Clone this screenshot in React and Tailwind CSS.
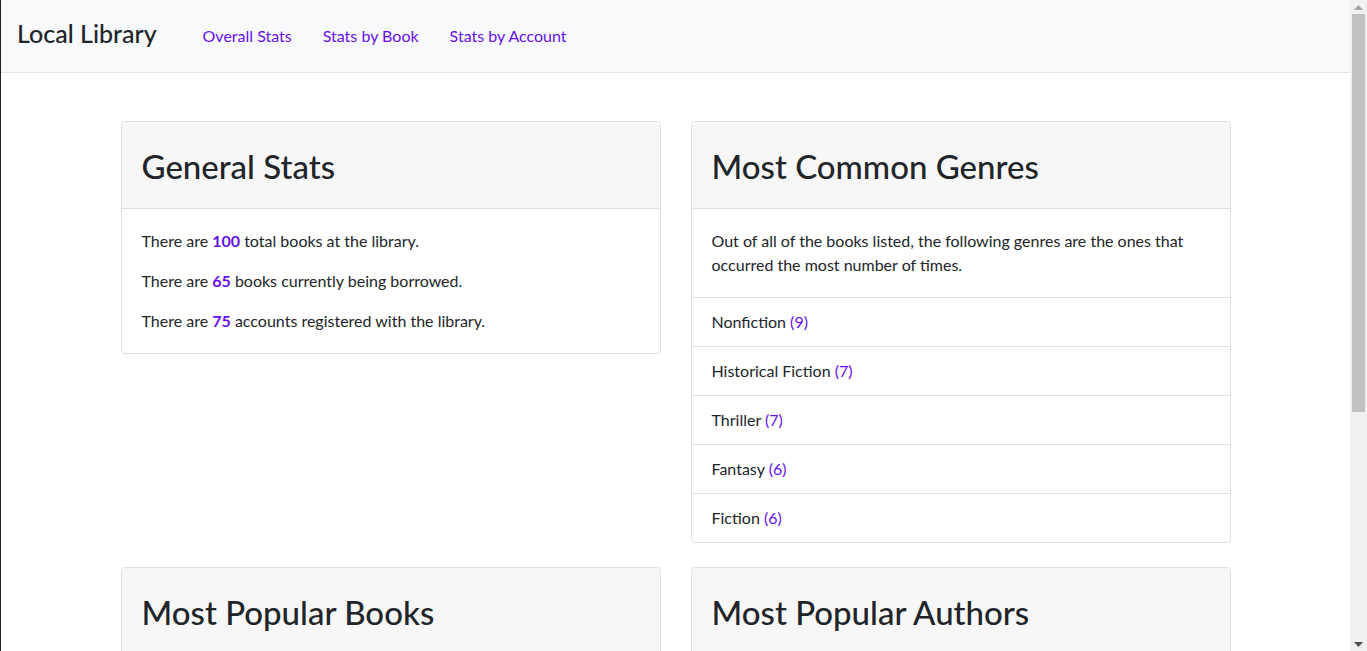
import React from 'react';

const font = { fontFamily: 'Lato, "Noto Sans", "Liberation Sans", sans-serif' };

const genres = [
  { name: 'Nonfiction', count: 9 },
  { name: 'Historical Fiction', count: 7 },
  { name: 'Thriller', count: 7 },
  { name: 'Fantasy', count: 6 },
  { name: 'Fiction', count: 6 },
];

const Card = ({ title, children }) => (
  <div className="border border-[#dfdfdf] rounded-[4px] bg-white overflow-hidden">
    <div className="h-[87px] bg-[#f7f7f7] border-b border-[#dfdfdf] px-5 flex items-center">
      <h2 className="text-[33px] font-medium leading-none text-[#212529] pt-[3px]">{title}</h2>
    </div>
    {children}
  </div>
);

const Num = ({ children }) => <strong className="font-bold text-[#6610f2]">{children}</strong>;

const App = () => {
  return (
    <div className="flex h-[651px] w-full overflow-hidden bg-white border-l border-[#222] text-[#212529]" style={font}>
      <div className="flex-1 min-w-0 overflow-hidden">
        {/* Navbar */}
        <nav className="h-[73px] bg-[#f8f9fa] border-b border-[#e3e4e6] flex items-center pl-4">
          <span className="text-[25px] font-medium leading-none text-[#212529] pb-[5px]">Local Library</span>
          <ul className="flex ml-[30px]">
            <li><a className="block px-4 text-[16px] text-[#6610f2]">Overall Stats</a></li>
            <li><a className="block px-[15px] text-[16px] text-[#6610f2]">Stats by Book</a></li>
            <li><a className="block px-4 text-[16px] text-[#6610f2]">Stats by Account</a></li>
          </ul>
        </nav>

        {/* Content */}
        <div className="w-[1110px] mx-auto mt-12">
          <div className="grid grid-cols-2 gap-x-[30px] items-start mb-6">
            <Card title="General Stats">
              <div className="p-5 text-[16px] leading-6 flex flex-col gap-4">
                <p>There are <Num>100</Num> total books at the library.</p>
                <p>There are <Num>65</Num> books currently being borrowed.</p>
                <p>There are <Num>75</Num> accounts registered with the library.</p>
              </div>
            </Card>

            <Card title="Most Common Genres">
              <div className="p-5 text-[16px] leading-6 border-b border-[#dfdfdf]">
                <p>Out of all of the books listed, the following genres are the ones that occurred the most number of times.</p>
              </div>
              <ul>
                {genres.map((g, i) => (
                  <li
                    key={g.name}
                    className={`px-5 py-3 text-[16px] leading-6 ${i < genres.length - 1 ? 'border-b border-[#dfdfdf]' : ''}`}
                  >
                    {g.name} <span className="text-[#6610f2]">({g.count})</span>
                  </li>
                ))}
              </ul>
            </Card>
          </div>

          {/* Second row, cut off by the window */}
          <div className="grid grid-cols-2 gap-x-[30px] items-start">
            <Card title="Most Popular Books">
              <div className="h-[40px]" />
            </Card>
            <Card title="Most Popular Authors">
              <div className="h-[40px]" />
            </Card>
          </div>
        </div>
      </div>

      {/* Scrollbar */}
      <div className="w-[17px] h-full bg-[#f1f1f1] flex flex-col items-center shrink-0">
        <div className="h-[14px] flex items-center justify-center">
          <svg width="9" height="5" viewBox="0 0 9 5"><path d="M0 5 L4.5 0 L9 5 Z" fill="#a3a3a3" /></svg>
        </div>
        <div className="w-[13px] h-[398px] bg-[#c1c1c1]" />
        <div className="flex-1" />
        <div className="h-[14px] flex items-center justify-center">
          <svg width="9" height="5" viewBox="0 0 9 5"><path d="M0 0 L9 0 L4.5 5 Z" fill="#505050" /></svg>
        </div>
      </div>
    </div>
  );
};

export default App;
